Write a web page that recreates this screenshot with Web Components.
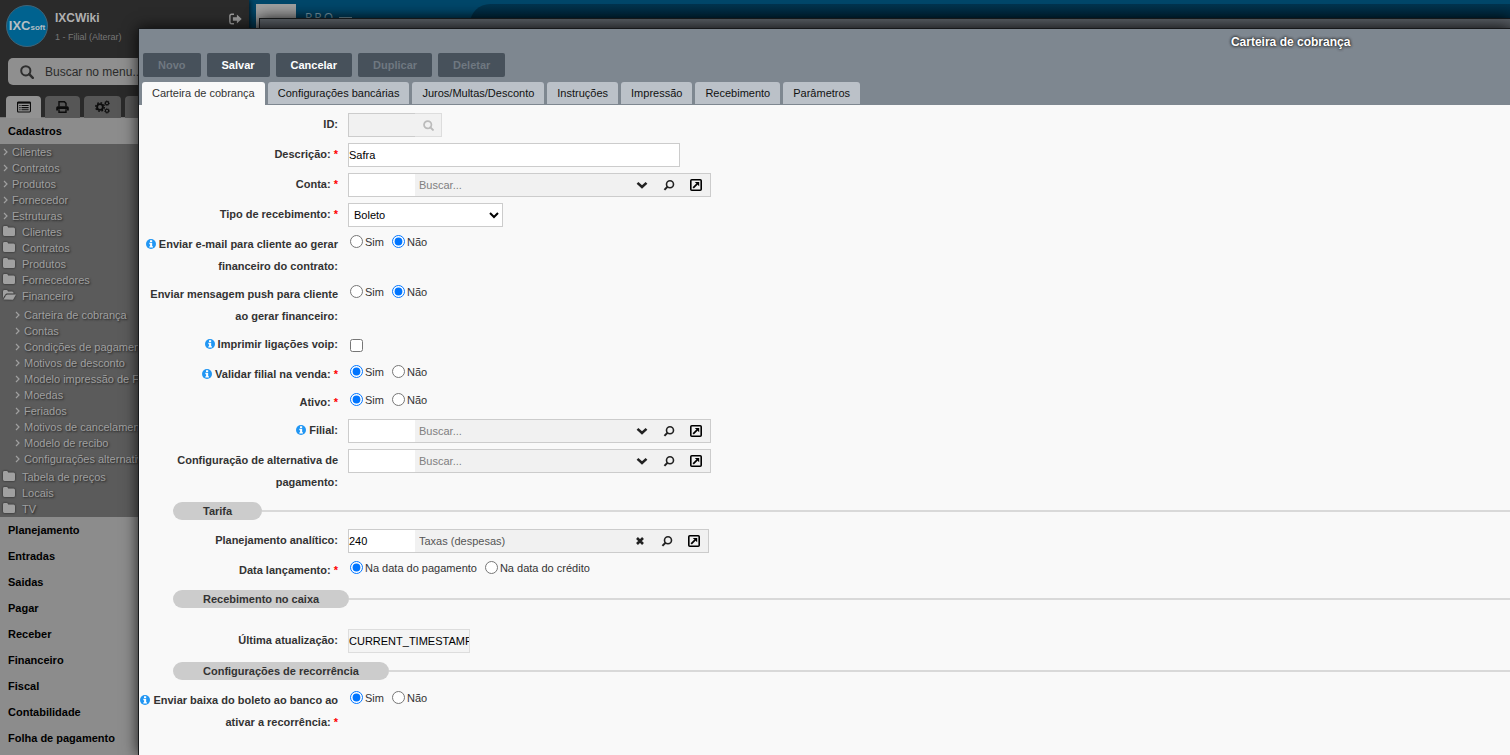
<!DOCTYPE html>
<html lang="pt-BR">
<head>
<meta charset="utf-8">
<title>Carteira de cobrança</title>
<style>
  html, body { height: 100%; margin: 0; }
  body { font: 11px/16px "Liberation Sans", Arial, sans-serif; color: #333; background: #00304a; overflow: hidden; }
</style>
</head>
<body>
<ixc-desktop>
  <ixc-sidebar slot="sidebar"></ixc-sidebar>
  <ixc-banner slot="banner"></ixc-banner>
  <ixc-window slot="window" class="back" heading="Carteiras de cobrança"></ixc-window>
  <ixc-window slot="window" class="front" heading="Carteira de cobrança">
    <ixc-toolbar slot="bar"></ixc-toolbar>
    <ixc-tabs slot="bar"></ixc-tabs>
    <ixc-field kind="id" label="ID"></ixc-field>
    <ixc-field kind="text" label="Descrição" value="Safra" required></ixc-field>
    <ixc-field kind="lookup" label="Conta" required></ixc-field>
    <ixc-field kind="select" label="Tipo de recebimento" value="Boleto" required></ixc-field>
    <ixc-field kind="radio" label="Enviar e-mail para cliente ao gerar financeiro do contrato" options="Sim|Não" value="Não" info></ixc-field>
    <ixc-field kind="radio" label="Enviar mensagem push para cliente ao gerar financeiro" options="Sim|Não" value="Não"></ixc-field>
    <ixc-field kind="check" label="Imprimir ligações voip" info></ixc-field>
    <ixc-field kind="radio" label="Validar filial na venda" options="Sim|Não" value="Sim" info required></ixc-field>
    <ixc-field kind="radio" label="Ativo" options="Sim|Não" value="Sim" required></ixc-field>
    <ixc-field kind="lookup" label="Filial" info></ixc-field>
    <ixc-field kind="lookup" label="Configuração de alternativa de pagamento"></ixc-field>
    <ixc-section>Tarifa</ixc-section>
    <ixc-field kind="lookup" label="Planejamento analítico" code="240" value="Taxas (despesas)"></ixc-field>
    <ixc-field kind="radio" label="Data lançamento" options="Na data do pagamento|Na data do crédito" value="Na data do pagamento" required></ixc-field>
    <ixc-section class="spaced">Recebimento no caixa</ixc-section>
    <ixc-field kind="stamp" label="Última atualização" value="CURRENT_TIMESTAMP"></ixc-field>
    <ixc-section>Configurações de recorrência</ixc-section>
    <ixc-field kind="radio" label="Enviar baixa do boleto ao banco ao ativar a recorrência" options="Sim|Não" value="Sim" info required></ixc-field>
  </ixc-window>
</ixc-desktop>

<script>
const svg = (w, h, box, body) =>
  `<svg width="${w}" height="${h}" viewBox="${box}" fill="none" stroke="currentColor" aria-hidden="true">${body}</svg>`;

const icons = {
  info: svg(10, 10, '0 0 12 12', '<circle cx="6" cy="6" r="6" fill="#2196f3" stroke="none"/><path d="M4.800 1.600h2.600v2H4.800zM4 4.600h3.400v4h.9v1.700H4V8.600h.9V6.300H4z" fill="#fff" stroke="none"/>'),
  search: svg(14, 14, '0 0 14 14', '<circle cx="5.800" cy="5.800" r="4.600" stroke-width="2"/><path d="M9.200 9.200l3.600 3.600" stroke-width="2.400" stroke-linecap="round"/>'),
  searchSmall: svg(11, 11, '0 0 14 14', '<circle cx="6" cy="6" r="4.700" stroke-width="2.200"/><path d="M9.400 9.400l3.200 3.200" stroke-width="2.600" stroke-linecap="round"/>'),
  find: svg(12, 12, '0 0 12 12', '<circle cx="7" cy="5.300" r="3.500" stroke-width="1.600"/><path d="M4.500 7.800L1.400 10.900" stroke-width="2"/>'),
  down: svg(12, 8, '0 0 12 8', '<path d="M1.500 1.900L6 6l4.500-4.100" stroke-width="2.600"/>'),
  clear: svg(8, 8, '0 0 8 8', '<path d="M1 1l6 6M7 1L1 7" stroke-width="2.600"/>'),
  open: svg(12, 12, '0 0 12 12', '<rect x=".8" y=".8" width="10.400" height="10.400" rx="1" stroke-width="1.600"/><path d="M3.200 8.800l4-4" stroke-width="1.800"/><path d="M4.800 2.900h4.400v4.400z" fill="currentColor" stroke="none"/>'),
  exit: svg(13, 12, '0 0 13 12', '<path d="M5 1.200H2.600Q.9 1.200.9 3v6q0 1.800 1.700 1.800H5" stroke-width="1.400"/><path d="M3.900 4.200h4V1.400L12.700 6 7.900 10.600V7.800h-4z" fill="currentColor" stroke="none"/>'),
  list: svg(14, 12, '0 0 15 12', '<rect x=".6" y=".6" width="13.800" height="10.800" rx="1" stroke-width="1.200"/><path d="M.6 1.500h13.800" stroke-width="1.800"/><path d="M2.500 4.400h1.300m1 0h7.700M2.500 6.700h1.300m1 0h7.700M2.500 9h1.300m1 0h7.700" stroke-width="1.200"/>'),
  print: svg(13, 12, '0 0 13 12', '<path d="M3 5.500V.8h5.400L10 2.400v3.100" stroke-width="1.400"/><path d="M.2 9.500V6.800q0-1.600 1.600-1.600h9.400q1.600 0 1.600 1.600v2.700H10.800V8H2.200v1.500z" fill="currentColor" stroke="none"/><path d="M3 8.200v3h7v-3" stroke-width="1.400"/>'),
  gears: svg(15, 14, '0 0 15 14', '<circle cx="5" cy="7" r="2.900" stroke-width="1.900"/><circle cx="5" cy="7" r="4.300" stroke-width="1.400" stroke-dasharray="1.700 1.677"/><circle cx="12" cy="3.200" r="1.600" stroke-width="1.100"/><circle cx="12" cy="3.200" r="2.400" stroke-width=".8" stroke-dasharray="1 .885"/><circle cx="12" cy="10.800" r="1.600" stroke-width="1.100"/><circle cx="12" cy="10.800" r="2.400" stroke-width=".8" stroke-dasharray="1 .885"/>'),
  wrench: svg(12, 12, '0 0 12 12', '<path d="M1.500 10.500l6-6" stroke-width="2.600"/><path d="M10.800 2.200A3 3 0 1 1 8.500 1" stroke-width="1.800"/>'),
  angle: svg(5, 8, '0 0 5 8', '<path d="M1 1l3 3-3 3" stroke-width="1.200"/>'),
  folder: svg(12, 10, '0 0 12 10', '<path d="M0 1.400Q0 0 1.400 0h2.400Q5 0 5.200 1.500h5.300Q12 1.500 12 3v5.500Q12 10 10.600 10H1.400Q0 10 0 8.600z" fill="currentColor" stroke="none"/>'),
  folderOpen: svg(13, 10, '0 0 13 10', '<path d="M0 8V1.400Q0 0 1.400 0h2.200Q4.900 0 5 1.500h4Q10.500 1.500 10.500 3v.6H4Q3 3.600 2.400 4.400z" fill="currentColor" stroke="none"/><path d="M.5 9.600L3 5.200q.5-.8 1.300-.8H13l-2.500 4.500q-.5.900-1.500.9z" fill="currentColor" stroke="none"/>')
};

class Base extends HTMLElement {
  connectedCallback() {
    if (this.shadowRoot) return;
    this.attachShadow({ mode: 'open' }).innerHTML =
      `<style>*{box-sizing:border-box} svg{display:block;flex:none} button,input,select{font:inherit;color:inherit;margin:0} ${this.css()}</style>${this.html()}`;
  }
}

customElements.define('ixc-desktop', class extends Base {
  css() { return `
    :host { display: grid; grid-template-columns: 249px 1fr; height: 100vh; position: relative; overflow: hidden; }
    ::slotted(ixc-window) { position: absolute; right: 0; bottom: 0; }
    ::slotted(.back) { left: 259px; top: 18px; }
    ::slotted(.front) { left: 138px; top: 28px; }`; }
  html() { return '<slot name="sidebar"></slot><slot name="banner"></slot><slot name="window"></slot>'; }
});

customElements.define('ixc-banner', class extends Base {
  css() { return `
    :host { display: flex; align-items: flex-start; height: 30px; padding: 4px 0 0 7px; background: linear-gradient(#00476a 4px, #00476a 10px, #00405f 18px); overflow: hidden; }
    .box { width: 40px; height: 26px; background: #a0a0a0; flex: none; }
    .name { margin: 6px 0 0 9px; font: 12px/16px "Open Sans", sans-serif; letter-spacing: 2px; color: #7d9dab; }
    .rule { width: 13px; height: 1px; margin: 13px 0 0 4px; background: #7d9dab; }
    .shade { flex: 1; height: 26px; margin-left: 118px; border-radius: 20px 0 0 0; background: linear-gradient(#00344f, #002a40 14px); }`; }
  html() { return '<span class="box"></span><span class="name">PRO</span><span class="rule"></span><span class="shade"></span>'; }
});

customElements.define('ixc-sidebar', class extends Base {
  css() { return `
    :host { display: flex; flex-direction: column; background: #2a2a2a; overflow: hidden; box-shadow: 0 0 6px #000; z-index: 0; }
    header { display: flex; padding: 5px 7px 0 6px; height: 58px; }
    .logo { display: flex; align-items: center; justify-content: center; width: 42px; height: 42px; border-radius: 50%; background: #00628f; border: 1px solid #3f6478; color: #b4bfc4; font-weight: bold; font-size: 13px; flex: none; }
    .logo small { font-size: 8px; padding-top: 3px; }
    .who { flex: 1; padding: 4px 0 0 7px; }
    .who b { display: block; font-size: 12px; line-height: 18px; color: #b0b0b0; }
    .who a { display: block; margin-top: 2px; font-size: 9px; line-height: 16px; color: #777; text-decoration: none; }
    .exit { width: 13px; height: 12px; margin-top: 8px; padding: 0; border: 0; background: none; color: #999; }
    .search { display: flex; align-items: center; height: 27px; margin: 0 8px; padding-left: 12px; border-radius: 5px; background: #8f8f8f; color: #2e2e2e; flex: none; }
    .search input { flex: 1; min-width: 0; margin-left: 11px; padding: 0; border: 0; background: none; font-size: 12px; outline: 0; }
    .search input::placeholder { color: #2b2b2b; opacity: 1; }
    nav { display: flex; gap: 4px; height: 33px; padding: 11px 0 0 6px; border-bottom: 1px solid #777; flex: none; }
    nav button { display: flex; align-items: center; justify-content: center; width: 35px; height: 22px; padding: 0; border: 0; border-radius: 4px 4px 0 0; background: #565656; color: #0c0c0c; }
    nav button:nth-child(n+3) { width: 37px; }
    nav button:first-child { background: #929292; }
    h3 { margin: 0; padding-left: 8px; font-size: 11px; line-height: 26px; height: 26px; background: #8c8c8c; color: #000; flex: none; }
    ul { list-style: none; margin: 0; padding: 0; }
    .tree { background: #5b5b5b; color: #a0a0a0; text-shadow: 1px 1px 2px #222; flex: none; }
    .tree a { display: flex; align-items: center; height: 16px; color: inherit; text-decoration: none; white-space: nowrap; }
    .leaf a { gap: 4px; padding-left: 3px; }
    .dir a { display: grid; grid-template-columns: 19px 1fr; padding-left: 3px; }
    .dir svg { margin-bottom: 2px; filter: drop-shadow(0 0 1px #222); }
    .sub { padding: 3px 0 2px; }
    .sub a { gap: 4px; padding-left: 15px; }
    .rest { background: #8c8c8c; flex: 1 0 auto; }`; }
  html() {
    const leaf = t => `<li><a href="#">${icons.angle}<span>${t}</span></a></li>`;
    const dir = (t, i = icons.folder) => `<li><a href="#">${i}<span>${t}</span></a></li>`;
    return `
    <header><span class="logo">IXC<small>soft</small></span>
      <div class="who"><b>IXCWiki</b><a href="#">1 - Filial (Alterar)</a></div>
      <button class="exit" aria-label="Sair">${icons.exit}</button></header>
    <label class="search">${icons.search}<input type="text" placeholder="Buscar no menu..." aria-label="Buscar no menu"></label>
    <nav><button aria-label="Cadastros">${icons.list}</button><button aria-label="Relatórios">${icons.print}</button><button aria-label="Configurações">${icons.gears}</button><button aria-label="Ferramentas">${icons.wrench}</button></nav>
    <h3>Cadastros</h3>
    <div class="tree">
      <ul class="leaf">${['Clientes', 'Contratos', 'Produtos', 'Fornecedor', 'Estruturas'].map(leaf).join('')}</ul>
      <ul class="dir">${['Clientes', 'Contratos', 'Produtos', 'Fornecedores'].map(t => dir(t)).join('')}${dir('Financeiro', icons.folderOpen)}</ul>
      <ul class="sub">${['Carteira de cobrança', 'Contas', 'Condições de pagamento', 'Motivos de desconto', 'Modelo impressão de Fatura', 'Moedas', 'Feriados', 'Motivos de cancelamento', 'Modelo de recibo', 'Configurações alternativas'].map(leaf).join('')}</ul>
      <ul class="dir">${['Tabela de preços', 'Locais', 'TV'].map(t => dir(t)).join('')}</ul>
    </div>
    <div class="rest">${['Planejamento', 'Entradas', 'Saidas', 'Pagar', 'Receber', 'Financeiro', 'Fiscal', 'Contabilidade', 'Folha de pagamento'].map(t => `<h3>${t}</h3>`).join('')}</div>`;
  }
});

customElements.define('ixc-window', class extends Base {
  css() { return `
    :host { display: flex; flex-direction: column; overflow: hidden; border: 1px solid #17191b; border-width: 1px 0 0 1px; background: #f9f9f9; box-shadow: 0 0 14px rgba(0,0,0,.8); }
    header { background: #7e8790; flex: none; }
    h2 { width: 168%; margin: 0; padding: 4px 0 2px; font-size: 12px; line-height: 18px; text-align: center; color: #fff; text-shadow: 0 0 3px #222, 0 0 3px #222; }
    main { padding-top: 8px; }
    :host(.back) header { background: linear-gradient(#565b61, #484c51 12px); flex: 1; }
    :host(.back) h2 { width: 183%; padding-top: 5px; color: #ccc; text-shadow: none; }`; }
  html() { return `<header><h2>${this.getAttribute('heading')}</h2><slot name="bar"></slot></header><main><slot></slot></main>`; }
});

customElements.define('ixc-toolbar', class extends Base {
  css() { return `
    :host { display: flex; gap: 6px; padding: 0 4px 5px; }
    button { height: 24px; padding: 0 15px; border: 0; border-radius: 2px; background: #47515b; color: #fff; font-weight: bold; }
    button:disabled { color: #6f7881; }`; }
  html() { return '<button disabled>Novo</button><button>Salvar</button><button>Cancelar</button><button disabled>Duplicar</button><button disabled>Deletar</button>'; }
});

customElements.define('ixc-tabs', class extends Base {
  css() { return `
    :host { display: flex; gap: 3px; padding-left: 3px; height: 23px; }
    button { height: 22px; padding: 0 10px; border: 0; border-radius: 3px 3px 0 0; background: #bbc1c8; color: #111; }
    button.active { height: 23px; padding-bottom: 1px; background: #f9f9f9; color: #333; }`; }
  html() { return ['Carteira de cobrança', 'Configurações bancárias', 'Juros/Multas/Desconto', 'Instruções', 'Impressão', 'Recebimento', 'Parâmetros'].map((t, i) => `<button${i ? '' : ' class="active"'}>${t}</button>`).join(''); }
});

customElements.define('ixc-section', class extends Base {
  css() { return `
    :host { display: flex; align-items: center; padding: 3px 0 9px 34px; }
    :host(.spaced) { padding-bottom: 21px; }
    h3 { margin: 0; padding: 0 30px; border-radius: 9px; background: #ccc; font-size: 11px; line-height: 18px; color: #333; }
    i { flex: 1; height: 2px; background: #d9d9d9; }`; }
  html() { return '<h3><slot></slot></h3><i></i>'; }
});

customElements.define('ixc-field', class extends Base {
  css() { return `
    :host { display: grid; grid-template-columns: 199px 1fr; column-gap: 10px; padding-bottom: 6px; }
    .label { text-align: right; line-height: 22px; font-weight: bold; color: #333; }
    .label svg { display: inline-block; vertical-align: -1px; margin-right: 3px; }
    .label em { font-style: normal; color: #f00; }
    input[type=text], select { height: 24px; padding: 0; border: 1px solid #ccc; border-radius: 0; background: #fff; color: #000; outline: 0; }
    .text { width: 332px; }
    select { width: 155px; padding-left: 1px; }
    input.stamp { width: 122px; border-color: #ddd; background: #f4f4f4; }
    .row { display: flex; }
    .lookup { width: 363px; height: 24px; padding-right: 1px; border: 1px solid #ccc; background: #f1f1f1; }
    .lookup.filled { width: 361px; }
    .lookup input[type=text] { height: 22px; border: 0; }
    .lookup .code { width: 66px; }
    .lookup .desc { flex: 1; min-width: 0; padding-left: 4px; background: none; color: #555; }
    .desc::placeholder { color: #808080; opacity: 1; }
    .lookup button { display: flex; align-items: center; justify-content: center; width: 27px; padding: 0; border: 0; background: none; color: #222; }
    .lookup button:last-child { color: #000; }
    .id input[type=text] { width: 67px; border-right: 0; background: #f1f1f1; }
    .id button { display: flex; align-items: center; justify-content: center; width: 27px; height: 24px; padding: 0; border: 1px solid #ddd; border-left: 0; background: #f1f1f1; color: #bbb; }
    .radios { gap: 8px; padding: 0 2px; }
    .radios label { display: flex; gap: 2px; line-height: 18px; }
    .radios input { width: 13px; height: 13px; margin-top: 2px; }
    .tick { display: flex; align-items: center; height: 24px; padding-left: 2px; }
    .tick input { width: 13px; height: 13px; }`; }
  html() {
    const kind = this.getAttribute('kind');
    const value = this.getAttribute('value') || '';
    const caption = `${this.hasAttribute('info') ? icons.info : ''}${this.getAttribute('label')}:${this.hasAttribute('required') ? ' <em>*</em>' : ''}`;
    if (kind === 'radio') {
      const items = this.getAttribute('options').split('|').map(o =>
        `<label><input type="radio" name="choice"${o === value ? ' checked' : ''}>${o}</label>`).join('');
      return `<span class="label" id="cap">${caption}</span><div class="row radios" role="radiogroup" aria-labelledby="cap">${items}</div>`;
    }
    const controls = {
      id: () => `<div class="row id"><input id="f" type="text" disabled><button disabled aria-label="Buscar">${icons.searchSmall}</button></div>`,
      text: () => `<div class="row"><input id="f" class="text" type="text" value="${value}"></div>`,
      stamp: () => `<div class="row"><input id="f" class="stamp" type="text" readonly value="${value}"></div>`,
      select: () => `<div class="row"><select id="f"><option>${value}</option></select></div>`,
      check: () => '<div class="tick"><input id="f" type="checkbox"></div>',
      lookup: () => `<div class="row lookup${value ? ' filled' : ''}"><input id="f" class="code" type="text" value="${this.getAttribute('code') || ''}"><input class="desc" type="text" placeholder="Buscar..." aria-label="Descrição do registro" value="${value}"><button aria-label="${value ? 'Limpar' : 'Expandir'}">${value ? icons.clear : icons.down}</button><button aria-label="Pesquisar">${icons.find}</button><button aria-label="Abrir">${icons.open}</button></div>`
    };
    return `<label class="label" for="f">${caption}</label>${controls[kind]()}`;
  }
});
</script>
</body>
</html>
